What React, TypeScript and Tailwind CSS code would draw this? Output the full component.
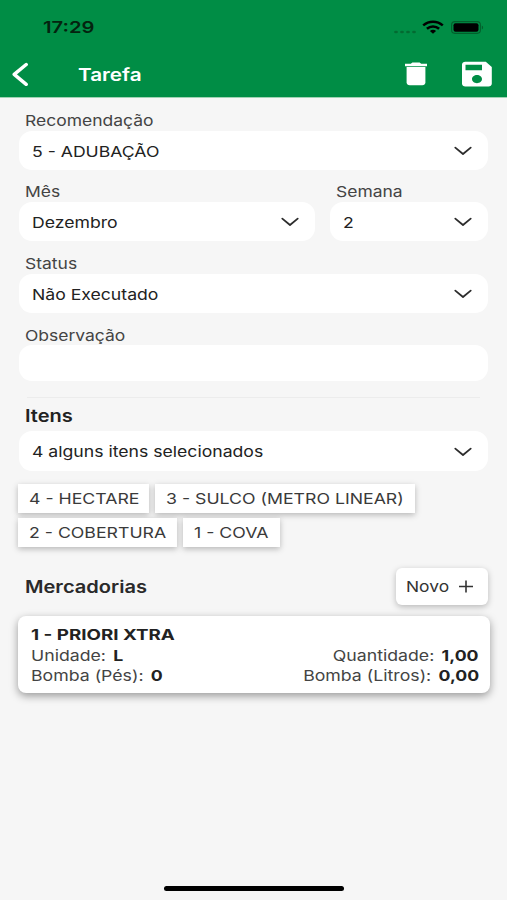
import type React from "react"
import clsx from "clsx"

type TextProps = {
  className?: string
  children: React.ReactNode
}

// Wide text: Inter stretched horizontally
const Text: React.FC<TextProps> = ({ className, children }) => (
  <span className={clsx("inline-block whitespace-nowrap", className)}>{children}</span>
)

const Chevron: React.FC = () => (
  <svg width="18" height="10" viewBox="0 0 18 10" fill="none" className="mt-px shrink-0">
    <path d="M1.3 1.6 9 8l7.7-6.4" stroke="#2c2c2c" strokeWidth="1.8" strokeLinecap="round" strokeLinejoin="round" />
  </svg>
)

type SelectProps = {
  label: string
  value: string
  className?: string
}

const SelectField: React.FC<SelectProps> = ({ label, value, className }) => (
  <div className={className}>
    <div className="flex h-[22px] items-center pl-[5.5px] text-[15px] text-[#444]">
      <Text className="origin-left translate-y-px scale-x-[1.165]">{label}</Text>
    </div>
    <div className="flex h-[39px] items-center justify-between rounded-[13px] bg-white pl-[12.5px] pr-4 text-[15px] text-[#222]">
      <Text className="origin-left translate-y-[1.5px] scale-x-[1.175]">{value}</Text>
      <Chevron />
    </div>
  </div>
)

const chips = [
  { label: "4 - HECTARE", width: "w-[131px]" },
  { label: "3 - SULCO (METRO LINEAR)", width: "w-[260px]" },
  { label: "2 - COBERTURA", width: "w-[159px]" },
  { label: "1 - COVA", width: "w-[97px]" },
]

const StatusBar: React.FC = () => (
  <div className="flex h-[54px] items-center justify-between pl-[42.5px] pr-[23px]">
    <Text className="origin-left scale-x-[1.26] text-[16px] font-semibold text-[#04230f]">17:29</Text>
    <div className="flex items-center">
      <svg width="24" height="4" viewBox="0 0 24 4" fill="#036a31" className="mr-[5px] mt-[9px]">
        <ellipse cx="3" cy="2" rx="1.9" ry="1.3" />
        <ellipse cx="9" cy="2" rx="1.9" ry="1.3" />
        <ellipse cx="15" cy="2" rx="1.9" ry="1.3" />
        <ellipse cx="21" cy="2" rx="1.9" ry="1.3" />
      </svg>
      <svg width="22" height="14" viewBox="0 0 22 14" fill="none" stroke="#000" strokeWidth="2.5" className="mr-[7px]">
        <path d="M1.2 5.4C6.8.5 15.2.5 20.8 5.4" />
        <path d="M4.9 8.8C8.4 5.7 13.6 5.7 17.1 8.8" />
        <path d="M7.9 10.9C9.6 9.2 12.4 9.2 14.1 10.9L11 13.7z" fill="#000" stroke="none" />
      </svg>
      <svg width="33" height="13" viewBox="0 0 33 13" fill="none">
        <rect x=".6" y=".6" width="28.8" height="11.8" rx="3.3" stroke="#035f2c" strokeWidth="1.1" />
        <rect x="2.5" y="2.2" width="25" height="8.6" rx="2" fill="#000" />
        <path d="M30.8 4.5c1.8.6 1.8 3.4 0 4z" fill="#035f2c" />
      </svg>
    </div>
  </div>
)

const Header: React.FC = () => (
  <header className="h-[98px] border-b border-[#9fd2b3] bg-[#008d45]">
    <StatusBar />
    <div className="flex h-10 items-center pl-3 pr-[15px]">
      <svg width="17" height="24" viewBox="0 0 17 24" fill="none">
        <path d="M14.2 2.5 2.2 12.4l12 9.9" stroke="#fff" strokeWidth="3.5" strokeLinecap="round" strokeLinejoin="round" />
      </svg>
      <Text className="ml-[49px] origin-left translate-y-[1.5px] scale-x-[1.22] text-[17px] font-semibold text-white">Tarefa</Text>
      <div className="ml-auto flex items-center">
        <svg width="22" height="24" viewBox="0 0 22 24" fill="#fff" className="mr-[35px]">
          <path d="M0 1.8h5.8L7.4.4h7.2l1.6 1.4H22v2.5H0z" />
          <path d="M1.6 5.1h18.8v15.2c0 1.7-1.3 3-3.1 3H4.7c-1.8 0-3.1-1.3-3.1-3z" />
        </svg>
        <svg width="30" height="26" viewBox="0 0 30 26" fill="#fff" fillRule="evenodd">
          <path d="M3.3.8h20.5L29.8 6v16.8c0 1.5-1.5 2.8-3.3 2.8H3.3C1.5 25.6 0 24.3 0 22.8V3.6C0 2.1 1.500.8 3.3.8zM3.500 3.7v5.600H20V3.7zM15 14c-2.800 0-5 1.800-5 4.100s2.200 4.200 5 4.200 5-1.900 5-4.200S17.800 14 15 14z" />
        </svg>
      </div>
    </div>
  </header>
)

const App: React.FC = () => {
  return (
    <div className="flex h-[900px] w-[507px] flex-col overflow-hidden bg-[#f6f6f6] font-['Inter',sans-serif]">
      <Header />

      <main className="flex flex-1 flex-col pl-[19px] pr-[19px] pt-[11px]">
        <SelectField label="Recomendação" value="5 - ADUBAÇÃO" />
        <div className="mt-[10px] flex gap-[15px]">
          <SelectField label="Mês" value="Dezembro" className="w-[296px]" />
          <SelectField label="Semana" value="2" className="flex-1" />
        </div>
        <SelectField label="Status" value="Não Executado" className="mt-[11px]" />

        <div className="mt-[10px] flex h-[22px] items-center pl-[5.5px] text-[15px] text-[#444]">
          <Text className="origin-left translate-y-[1.5px] scale-x-[1.165]">Observação</Text>
        </div>
        <div className="h-[36px] rounded-[13px] bg-white" />

        {/* Itens */}
        <div className="ml-2 mr-2 mt-4 h-px bg-[#ececec]" />
        <div className="mt-[6px] flex h-[24px] items-center pl-1.5 text-[17px] font-semibold text-[#222]">
          <Text className="origin-left translate-y-px scale-x-[1.18]">Itens</Text>
        </div>
        <div className="mt-[3px] flex h-[40px] items-center justify-between rounded-[13px] bg-white pl-[12.5px] pr-4 text-[15px] text-[#222]">
          <Text className="origin-left translate-y-px scale-x-[1.175]">4 alguns itens selecionados</Text>
          <Chevron />
        </div>
        <div className="-ml-px mt-[13px] flex flex-wrap gap-x-[6px] gap-y-[5px]">
          {chips.map((chip) => (
            <div
              key={chip.label}
              className={clsx("flex h-[29px] items-center bg-white pl-[10.5px] text-[15px] text-[#3a3a3a] shadow-[0_2px_6px_rgba(0,0,0,0.26)]", chip.width)}
            >
              <Text className="origin-left translate-y-px scale-x-[1.18]">{chip.label}</Text>
            </div>
          ))}
        </div>

        {/* Mercadorias */}
        <div className="mt-[21px] flex h-[37px] items-center justify-between pl-1.5">
          <Text className="origin-left translate-y-px scale-x-[1.18] text-[17px] font-semibold text-[#2a2a2a]">Mercadorias</Text>
          <button className="flex h-[37px] w-[92px] items-center justify-between rounded-[6px] bg-white pl-[10px] pr-[15px] text-[15px] text-[#333] shadow-[0_2px_6px_rgba(0,0,0,0.25)]">
            <Text className="origin-left translate-y-px scale-x-[1.16]">Novo</Text>
            <svg width="14" height="13" viewBox="0 0 14 13" stroke="#333" strokeWidth="1.6">
              <path d="M0 6.5h14M7 .5v12" />
            </svg>
          </button>
        </div>
        <div className="-ml-px -mr-[2px] mt-[11px] h-[76.5px] rounded-[8px] bg-white pl-[12.5px] pr-[11px] pt-[9px] text-[15px] leading-[20.5px] text-[#444] shadow-[0_3px_8px_rgba(0,0,0,0.38)]">
          <div className="flex">
            <Text className="origin-left scale-x-[1.25] font-bold text-[#222]">1 - PRIORI XTRA</Text>
          </div>
          <div className="flex justify-between">
            <Text className="origin-left scale-x-[1.18]">
              Unidade: <b className="ml-0.5 text-[#222]">L</b>
            </Text>
            <Text className="origin-right scale-x-[1.18]">
              Quantidade: <b className="ml-0.5 text-[#222]">1,00</b>
            </Text>
          </div>
          <div className="flex justify-between">
            <Text className="origin-left scale-x-[1.18]">
              Bomba (Pés): <b className="ml-0.5 text-[#222]">0</b>
            </Text>
            <Text className="origin-right scale-x-[1.18]">
              Bomba (Litros): <b className="ml-0.5 text-[#222]">0,00</b>
            </Text>
          </div>
        </div>
      </main>

      {/* Home indicator */}
      <div className="mx-auto mb-[9px] h-[5px] w-[180px] rounded-full bg-black" />
    </div>
  )
}

export default App
